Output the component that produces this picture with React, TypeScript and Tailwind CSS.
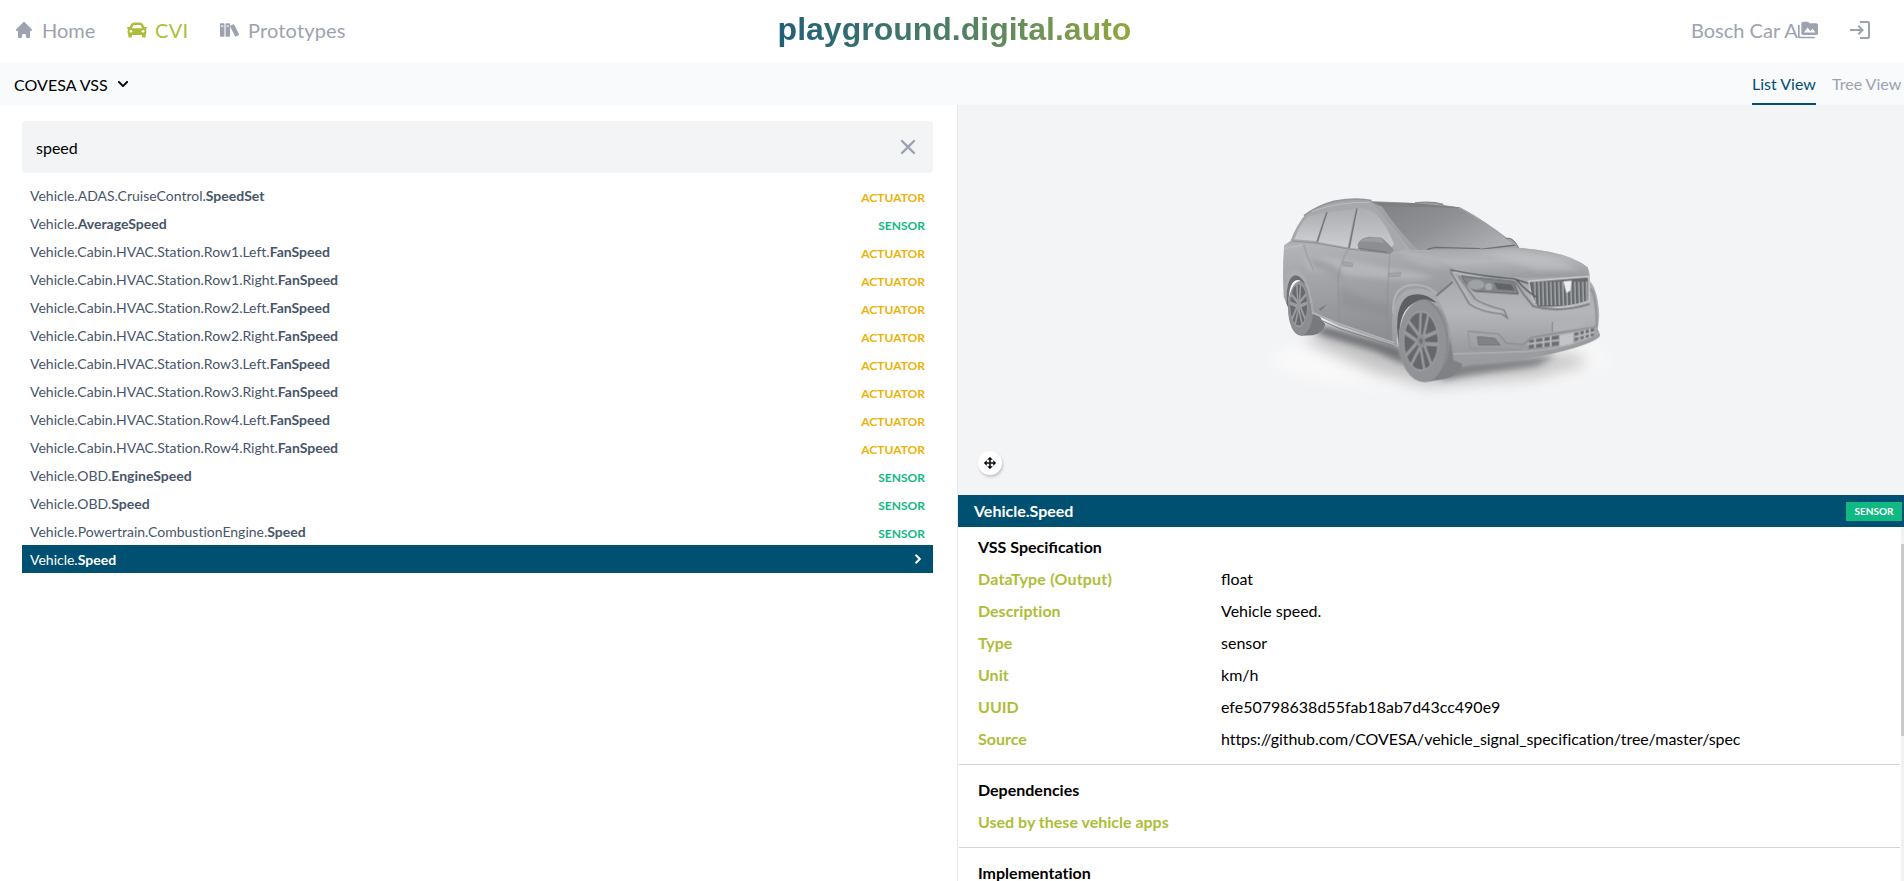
import type { ReactNode } from "react";
import { HiChevronRight, HiHome, HiX } from "react-icons/hi";
import { FaCar, FaChevronDown } from "react-icons/fa";
import { ImBooks } from "react-icons/im";
import { MdLogin, MdPermMedia } from "react-icons/md";
import { BiMove } from "react-icons/bi";

type Kind = "ACTUATOR" | "SENSOR";

const signals: { path: string; name: string; kind: Kind; selected?: boolean }[] = [
  { path: "Vehicle.ADAS.CruiseControl.", name: "SpeedSet", kind: "ACTUATOR" },
  { path: "Vehicle.", name: "AverageSpeed", kind: "SENSOR" },
  { path: "Vehicle.Cabin.HVAC.Station.Row1.Left.", name: "FanSpeed", kind: "ACTUATOR" },
  { path: "Vehicle.Cabin.HVAC.Station.Row1.Right.", name: "FanSpeed", kind: "ACTUATOR" },
  { path: "Vehicle.Cabin.HVAC.Station.Row2.Left.", name: "FanSpeed", kind: "ACTUATOR" },
  { path: "Vehicle.Cabin.HVAC.Station.Row2.Right.", name: "FanSpeed", kind: "ACTUATOR" },
  { path: "Vehicle.Cabin.HVAC.Station.Row3.Left.", name: "FanSpeed", kind: "ACTUATOR" },
  { path: "Vehicle.Cabin.HVAC.Station.Row3.Right.", name: "FanSpeed", kind: "ACTUATOR" },
  { path: "Vehicle.Cabin.HVAC.Station.Row4.Left.", name: "FanSpeed", kind: "ACTUATOR" },
  { path: "Vehicle.Cabin.HVAC.Station.Row4.Right.", name: "FanSpeed", kind: "ACTUATOR" },
  { path: "Vehicle.OBD.", name: "EngineSpeed", kind: "SENSOR" },
  { path: "Vehicle.OBD.", name: "Speed", kind: "SENSOR" },
  { path: "Vehicle.Powertrain.CombustionEngine.", name: "Speed", kind: "SENSOR" },
  { path: "Vehicle.", name: "Speed", kind: "SENSOR", selected: true },
];

// Keeps the fi/fl ligatures while the rest of the page has them turned off.
function Lig({ children }: { children: ReactNode }) {
  return <span className="[font-variant-ligatures:common-ligatures]">{children}</span>;
}

const spec: { label: ReactNode; value: ReactNode }[] = [
  { label: <span className="tracking-[0.2px]">DataType (Output)</span>, value: <Lig>float</Lig> },
  { label: "Description", value: "Vehicle speed." },
  { label: "Type", value: "sensor" },
  { label: "Unit", value: "km/h" },
  { label: "UUID", value: "efe50798638d55fab18ab7d43cc490e9" },
  {
    label: "Source",
    value: (
      <span className="tracking-[-0.08px]">
        https://github.com/COVESA/vehicle_signal_speci<Lig>fi</Lig>cation/tree/master/spec
      </span>
    ),
  },
];

const spokes = [0, 72, 144, 216, 288];

function CarImage() {
  return (
    <svg viewBox="0 0 1200 720" width="400" height="240" aria-hidden="true">
      <defs>
        <linearGradient id="body" x1="0" y1="0" x2="0" y2="1">
          <stop offset="0" stopColor="#a3a5a8" />
          <stop offset="0.35" stopColor="#aeb0b3" />
          <stop offset="0.7" stopColor="#a4a6a9" />
          <stop offset="1" stopColor="#939598" />
        </linearGradient>
        <linearGradient id="side" x1="0" y1="0" x2="0.2" y2="1">
          <stop offset="0" stopColor="#b3b5b8" />
          <stop offset="0.3" stopColor="#a6a8ab" />
          <stop offset="0.62" stopColor="#9a9c9f" />
          <stop offset="1" stopColor="#8c8e92" />
        </linearGradient>
        <linearGradient id="hood" x1="0" y1="0" x2="0.2" y2="1">
          <stop offset="0" stopColor="#a4a6a9" />
          <stop offset="0.5" stopColor="#b4b6b9" />
          <stop offset="1" stopColor="#9c9ea1" />
        </linearGradient>
        <linearGradient id="screen" x1="0" y1="0" x2="1" y2="0.7">
          <stop offset="0" stopColor="#808285" />
          <stop offset="0.5" stopColor="#8f9194" />
          <stop offset="1" stopColor="#acaeb1" />
        </linearGradient>
        <linearGradient id="glass" x1="0" y1="0" x2="0" y2="1">
          <stop offset="0" stopColor="#acaeb1" />
          <stop offset="1" stopColor="#cbcdd0" />
        </linearGradient>
        <linearGradient id="bumper" x1="0" y1="0" x2="0" y2="1">
          <stop offset="0" stopColor="#a4a6a9" />
          <stop offset="0.5" stopColor="#b4b6b9" />
          <stop offset="1" stopColor="#989a9d" />
        </linearGradient>
        <filter id="soft" x="-30%" y="-80%" width="160%" height="260%">
          <feGaussianBlur stdDeviation="22" />
        </filter>
        <filter id="near" x="-20%" y="-60%" width="140%" height="220%">
          <feGaussianBlur stdDeviation="10" />
        </filter>
        <filter id="shade" x="-20%" y="-40%" width="140%" height="180%">
          <feGaussianBlur stdDeviation="8" />
        </filter>
        <filter id="edge">
          <feGaussianBlur stdDeviation="1.3" />
        </filter>
      </defs>

      {/* ground shadow on a faint light pool */}
      <ellipse cx="600" cy="570" rx="510" ry="85" fill="#f9f9f9" filter="url(#soft)" />
      <path d="M190 510 L260 470 L480 530 L680 575 L1000 550 L1050 580 L880 625 L560 650 L400 605Z" fill="#97979a" opacity="0.55" filter="url(#soft)" />
      <path d="M225 490 L250 465 L480 528 L500 585 L400 542Z" fill="#55575a" opacity="0.75" filter="url(#near)" />
      <path d="M640 592 L680 578 L950 555 L890 588 L690 615 L600 632Z" fill="#65676a" opacity="0.75" filter="url(#near)" />

      <g filter="url(#edge)">
        {/* rear wheel */}
        <path d="M183 332 C215 340 222 430 256 462 Q250 490 218 496 L183 497Z" fill="#77797d" />
        <ellipse cx="182" cy="415" rx="38" ry="82" fill="#8b8d91" />
        <ellipse cx="176" cy="405" rx="27" ry="66" fill="#696b6f" />
        <g transform="translate(176 405) scale(0.4 0.96)">
          {spokes.map((a) => (
            <g key={a} transform={`rotate(${a})`} stroke="#9a9ca0" strokeWidth="11" fill="none">
              <path d="M-5 0 L-14 -64 M5 0 L14 -64" />
            </g>
          ))}
          <circle r="67" fill="none" stroke="#989a9e" strokeWidth="6" />
          <circle r="16" fill="#96989c" />
        </g>

        {/* body shell */}
        <path
          d="M133 226 L152 212 Q170 165 195 135 Q225 108 282 93 Q350 82 395 93 L520 99 Q572 94 610 104 L660 113 Q735 152 800 203 Q822 205 837 234 Q985 245 1042 291 Q1051 305 1050 335 Q1072 360 1077 430 L1073 475 L1080 496 Q1060 522 930 552 Q790 582 665 582 L637 570 Q630 450 590 405 Q540 360 500 385 Q468 410 471 526 L300 468 L216 430 Q205 325 165 318 Q138 325 139 400 L131 380 Q126 290 133 226Z"
          fill="url(#body)"
        />
        {/* dark arches */}
        <path d="M475 525 Q460 405 505 378 Q550 362 590 398 L560 392 Q490 390 480 470Z" fill="#5c5f63" />
        <path d="M139 400 Q138 322 165 316 Q185 318 197 345 Q175 320 160 336 Q145 350 145 415Z" fill="#6c6e72" />
        {/* flank */}
        <path
          d="M133 226 L190 220 L325 236 L450 248 Q590 262 650 300 L635 340 L590 375 Q550 345 500 360 Q455 385 456 460 L458 518 L300 462 L222 425 Q210 330 170 303 Q145 300 136 345 Q130 290 133 226Z"
          fill="url(#side)"
        />
      </g>
      <path d="M190 255 Q340 270 445 295 Q520 300 580 325 L500 330 Q380 325 205 300Z" fill="#bfc1c4" opacity="0.6" filter="url(#shade)" />
      <path d="M200 262 Q250 265 300 300 L310 325 L225 295Z" fill="#85888b" opacity="0.45" filter="url(#shade)" />
      <path d="M305 350 Q370 390 445 400 L445 440 L300 410Z" fill="#898c90" opacity="0.45" filter="url(#shade)" />
      <g filter="url(#edge)">
        <path d="M460 430 Q455 350 515 345 Q570 340 600 385" fill="none" stroke="#aeb0b3" strokeWidth="7" />
        <path d="M137 325 Q150 290 175 305 Q205 330 213 400" fill="none" stroke="#acaeb1" strokeWidth="5" />
        <path d="M216 428 L300 462 L462 518" fill="none" stroke="#b1b3b6" strokeWidth="5" />
        <path d="M219 440 L300 476 L462 528" fill="none" stroke="#7d8084" strokeWidth="3" />
        <path d="M236 418 L262 402 L242 422Z" fill="#75787c" />

        {/* roof and side windows */}
        <path d="M152 212 Q170 165 197 135 Q240 108 300 99 L400 97 Q440 150 500 236 L455 250 L325 236 L225 220Z" fill="#a6a8ab" />
        <path d="M163 208 Q180 160 204 140 L256 127 L230 213Z" fill="url(#glass)" />
        <path d="M236 216 L262 127 L345 116 L323 232Z" fill="url(#glass)" />
        <path d="M331 234 L353 114 Q385 112 408 132 Q440 165 462 222 L445 244Z" fill="url(#glass)" />
        <path d="M231 216 L261 127 M327 234 L351 115" stroke="#73767a" strokeWidth="4" />
        <path d="M155 213 L225 219 L325 237 L450 250" fill="none" stroke="#8e9195" strokeWidth="3" />
        <path d="M192 137 Q230 108 282 94 Q350 82 395 92" fill="none" stroke="#94969a" strokeWidth="5" />
        <path d="M215 124 Q300 94 390 97" fill="none" stroke="#bbbdc0" strokeWidth="3" />
        <path d="M395 96 L660 112 Q735 150 836 234 Q690 240 510 240 Q455 165 395 96Z" fill="#a0a2a5" />
        <path d="M395 96 L520 99 L660 112 L640 117 L430 112Z" fill="#7d7f82" />
        <path d="M425 108 L655 114 Q735 156 822 225 L730 236 L535 240 Q480 190 425 108Z" fill="url(#screen)" />
        <path d="M525 99 Q575 93 610 104" fill="none" stroke="#8c8f92" strokeWidth="5" />
        <path d="M562 238 L585 232 L720 236 M720 238 L828 225" fill="none" stroke="#6c6f73" strokeWidth="4" />
        <path d="M798 205 Q820 200 836 234" fill="#a0a2a5" stroke="#727579" strokeWidth="3" />

        {/* bonnet */}
        <path d="M500 243 L730 238 L838 233 Q985 245 1043 292 L1045 318 Q930 330 830 322 Q740 318 655 300 Q610 260 500 243Z" fill="url(#hood)" />

        {/* door mirror */}
        <path d="M352 226 Q358 203 388 200 L425 203 Q448 222 462 240 Q455 254 430 250 L362 242Z" fill="#8c8e92" />
        <path d="M358 215 Q370 200 425 203 L432 219 Q390 214 358 215Z" fill="#9b9da1" />
        <path d="M354 234 L440 247" stroke="#74777b" strokeWidth="3" />
      </g>
      <path d="M820 240 Q940 255 1020 300 L890 300 Q800 262 700 250Z" fill="#c1c3c5" opacity="0.6" filter="url(#shade)" />
      <path d="M470 250 Q580 255 640 295 L560 290Z" fill="#bdbfc2" opacity="0.5" filter="url(#shade)" />

      <g filter="url(#edge)">
        {/* nose and bumper */}
        <path d="M632 300 Q740 320 850 325 L1046 318 L1050 335 Q1073 360 1077 440 L1073 475 Q1020 505 870 528 L850 545 L640 552 Q630 440 588 378 L638 335Z" fill="url(#bumper)" />
        <path d="M588 378 L638 336" stroke="#64676b" strokeWidth="4" />
        <path d="M640 552 L850 545 Q1000 535 1076 486 L1080 498 Q1060 522 930 552 Q790 582 665 582 L637 572Z" fill="#9a9c9f" />
        <path d="M640 552 L850 545 Q1000 535 1076 488" fill="none" stroke="#b8babc" strokeWidth="3" />
        <path d="M1052 355 Q1070 380 1070 470" fill="none" stroke="#94969a" strokeWidth="7" />

        {/* head lamp */}
        <path d="M630 300 Q730 320 820 326 L866 340 L886 403" fill="none" stroke="#54575b" strokeWidth="4" />
        <path d="M640 306 Q740 327 815 333" fill="none" stroke="#d1d3d5" strokeWidth="3" />
        <path d="M664 318 L820 334 L835 372 L705 364 Q680 350 664 318Z" fill="#828589" stroke="#606367" strokeWidth="3" />
        <ellipse cx="708" cy="344" rx="25" ry="15" fill="#a0a3a6" />
        <path d="M762 338 L815 343 L824 362 L772 358Z" fill="#616468" />
        <circle cx="746" cy="350" r="11" fill="#a5a8ab" />
        <path d="M632 306 L688 402 Q720 425 785 432 L802 444 L792 420 Q740 408 706 388 L655 318" fill="none" stroke="#7c7f83" strokeWidth="4" />
        <path d="M640 310 L695 398 Q725 417 785 425" fill="none" stroke="#bcbec0" strokeWidth="3" />

        {/* grille */}
        <path d="M866 334 L1046 320 L1047 393 Q975 418 892 411 Q874 390 866 334Z" fill="#65686c" stroke="#d3d5d7" strokeWidth="4" />
        {[884, 896, 908, 920, 932, 944, 956, 968, 980, 992, 1004, 1016, 1028, 1039].map((x) => (
          <path key={x} d={`M${x} 335 L${x + 2} 406`} stroke="#b2b4b7" strokeWidth="4" />
        ))}
        <path d="M970 334 L995 332 L991 362 L979 369Z" fill="#eceeef" />
        <path d="M825 335 Q850 375 880 409 Q960 430 1049 402" fill="none" stroke="#7c7f83" strokeWidth="6" />
        <path d="M828 328 Q860 365 890 382" fill="none" stroke="#54575b" strokeWidth="4" />

        {/* plate, air intakes and fog lamp */}
        <path d="M937 455 L1035 438 L1036 468 L937 486Z" fill="#b0b2b5" />
        <path d="M937 455 L937 486" stroke="#808387" strokeWidth="3" />
        <path d="M684 484 L775 492 L800 520 L850 524 L875 502 L1070 470" fill="none" stroke="#8c8f93" strokeWidth="4" />
        <path d="M684 484 L690 535 L840 538 L862 510" fill="none" stroke="#919498" strokeWidth="3" />
        <path d="M712 500 L765 505 L780 525 L716 525Z" fill="#808387" stroke="#74777b" strokeWidth="3" />
        <path d="M868 510 L957 496 L957 525 L866 536Z" fill="#6b6e72" />
        <path d="M1003 489 L1062 474 L1062 497 L1004 512Z" fill="#6b6e72" />
        <path d="M864 522 L957 510 M885 506 V534 M910 502 V532 M932 498 V530 M1003 501 L1064 486 M1018 483 V512 M1034 479 V508 M1049 474 V503" stroke="#b4b6b9" strokeWidth="6" />
        <path d="M958 496 L1000 488 L1000 520 L958 528Z" fill="#c2c4c7" />

        {/* front wheel */}
        <path d="M545 389 C620 395 635 520 640 570 L668 582 Q660 615 610 628 L555 636Z" fill="#7f8185" />
        <ellipse cx="552" cy="512" rx="77" ry="124" fill="#909296" />
        <path d="M565 392 Q615 430 622 510 Q624 580 590 622" fill="none" stroke="#777a7e" strokeWidth="4" strokeDasharray="4 4" />
        <ellipse cx="543" cy="513" rx="52" ry="90" fill="#65676b" />
        <g transform="translate(543 513) scale(0.57 0.97)">
          {spokes.map((a) => (
            <g key={a} transform={`rotate(${a + 12})`} stroke="#97999d" strokeWidth="13" fill="none">
              <path d="M-8 0 L-20 -88 M8 0 L20 -88" />
            </g>
          ))}
          <circle r="91" fill="none" stroke="#999b9f" strokeWidth="7" />
          <circle r="22" fill="#8d9094" />
          <circle r="9" fill="#6f7276" />
        </g>

        {/* door seams */}
        <path d="M325 237 Q298 280 294 330 L298 458 M450 250 Q442 330 441 420 L444 505 M190 222 Q200 260 220 300" fill="none" stroke="#8a8d91" strokeWidth="2" />
        <path d="M308 276 L336 279 L338 289 L309 287Z M446 310 L483 307 L480 318 L448 319Z" fill="#a5a7aa" stroke="#8c8f92" strokeWidth="2" />
        <path d="M133 236 L190 224" stroke="#c1c3c5" strokeWidth="3" />
      </g>
    </svg>
  );
}

function Header() {
  return (
    <header className="flex h-[63px] items-center justify-between pb-[3px] text-xl text-[#9ca3af]">
      <nav className="flex w-[700px] items-center pl-[14px]">
        <a className="flex w-[113px] items-center gap-2">
          <HiHome size={20} />
          Home
        </a>
        <a className="flex w-[93px] items-center gap-2 text-[#aebd38]">
          <FaCar size={20} />
          <span className="tracking-[0.3px]">CVI</span>
        </a>
        <a className="flex items-center gap-2">
          <ImBooks size={20} />
          <span className="tracking-[0.15px]">Prototypes</span>
        </a>
      </nav>
      <h1 className="bg-linear-to-r from-[#1f5f78] via-[#4f7f62] to-[#91a83d] bg-clip-text pb-0.5 font-['Liberation_Sans',Arial,sans-serif] text-[32px] leading-[44px] font-bold whitespace-nowrap text-transparent">
        playground.digital.auto
      </h1>
      <div className="flex w-[695px] items-center justify-end pr-[32px]">
        <span className="w-[107px] overflow-hidden whitespace-nowrap">Bosch Car A</span>
        <MdPermMedia size={20} />
        <MdLogin size={24} className="ml-[30px]" />
      </div>
    </header>
  );
}

function Toolbar() {
  return (
    <div className="flex h-[42px] items-stretch justify-between bg-[#f8fafc]">
      <button className="flex items-center gap-[9px] pt-0.5 pl-[14px] text-black">
        <span className="tracking-[0.05px]">COVESA VSS</span>
        <FaChevronDown size={12} className="mb-0.5" />
      </button>
      <div className="flex gap-4 pr-[2px] whitespace-nowrap">
        <a className="flex w-16 items-center border-b-2 border-[#005072] pt-0.5 text-[#005072]">List View</a>
        <a className="flex w-[70px] items-center border-b-2 border-transparent pt-0.5 text-[#9ca3af]">Tree View</a>
      </div>
    </div>
  );
}

function SignalList() {
  return (
    <section className="w-[957px] shrink-0 pt-4 pr-6 pl-[22px]">
      <div className="flex h-[52px] items-center justify-between rounded-sm bg-[#f3f4f6] pr-[13px] pl-[14px]">
        <span className="pt-0.5 text-black">speed</span>
        <HiX size={24} className="text-[#9ca3af]" />
      </div>
      <ul className="pt-2">
        {signals.map((s) => (
          <li
            key={s.path + s.name}
            className={
              s.selected
                ? "flex h-7 items-center justify-between bg-[#005072] px-2 pt-0.5 text-sm text-white"
                : "flex h-7 items-center justify-between px-2 pt-0.5 text-sm text-[#475569]"
            }
          >
            <span>
              {s.path}
              <b className="font-bold">{s.name}</b>
            </span>
            {s.selected ? (
              <HiChevronRight size={18} className="-mr-0.5 mb-0.5" stroke="currentColor" strokeWidth={0.4} />
            ) : (
              <span className={s.kind === "SENSOR" ? "pt-1 text-xs font-bold text-[#10b981]" : "pt-1 text-xs font-bold text-[#eab308]"}>
                {s.kind}
              </span>
            )}
          </li>
        ))}
      </ul>
    </section>
  );
}

function Details() {
  return (
    <section className="flex min-w-0 flex-1 flex-col border-l border-[#e5e7eb]">
      <div className="flex h-[390px] shrink-0 flex-col justify-between bg-[#f3f4f6]">
        <div className="pt-[65px] pl-[282px]">
          <CarImage />
        </div>
        <button className="mb-5 ml-5 flex size-6 items-center justify-center rounded-full bg-white text-black shadow-[1px_2px_3px_rgba(0,0,0,0.2)]">
          <BiMove size={14} stroke="currentColor" strokeWidth={0.8} />
        </button>
      </div>
      <div className="flex h-8 shrink-0 items-center justify-between bg-[#005072] pr-[2px] pl-4 font-bold text-white">
        Vehicle.Speed
        <span className="flex h-[19px] w-14 items-center justify-center bg-[#10b981] pt-px text-[10px]">SENSOR</span>
      </div>
      <div className="flex min-h-0 flex-1">
        <div className="min-w-0 flex-1 overflow-hidden pr-px pl-px text-black">
          <div className="border-b border-[#d1d5db] pt-1 pb-[9px] pl-[19px]">
            <h2 className="flex h-8 items-center font-bold">
              <span>
                VSS Speci<Lig>fi</Lig>cation
              </span>
            </h2>
            {spec.map(({ label, value }, i) => (
              <div key={i} className="flex h-8 items-center">
                <span className="w-[243px] font-bold text-[#aebd38]">{label}</span>
                <span>{value}</span>
              </div>
            ))}
          </div>
          <div className="border-b border-[#d1d5db] pt-[9px] pb-[9px] pl-[19px]">
            <h2 className="flex h-8 items-center font-bold">Dependencies</h2>
            <p className="flex h-8 items-center font-bold text-[#aebd38]">Used by these vehicle apps</p>
          </div>
          <h2 className="flex h-[50px] items-center pl-[19px] font-bold">Implementation</h2>
        </div>
        <div className="w-[3px] shrink-0 bg-[#f1f1f1] pt-[17px]">
          <div className="h-48 bg-[#cacaca]" />
        </div>
      </div>
    </section>
  );
}

export default function App() {
  return (
    <div className="flex h-[881px] w-[1904px] flex-col overflow-hidden bg-white font-[Lato,sans-serif] text-base [font-variant-ligatures:no-common-ligatures]">
      <Header />
      <Toolbar />
      <main className="flex min-h-0 flex-1">
        <SignalList />
        <Details />
      </main>
    </div>
  );
}
